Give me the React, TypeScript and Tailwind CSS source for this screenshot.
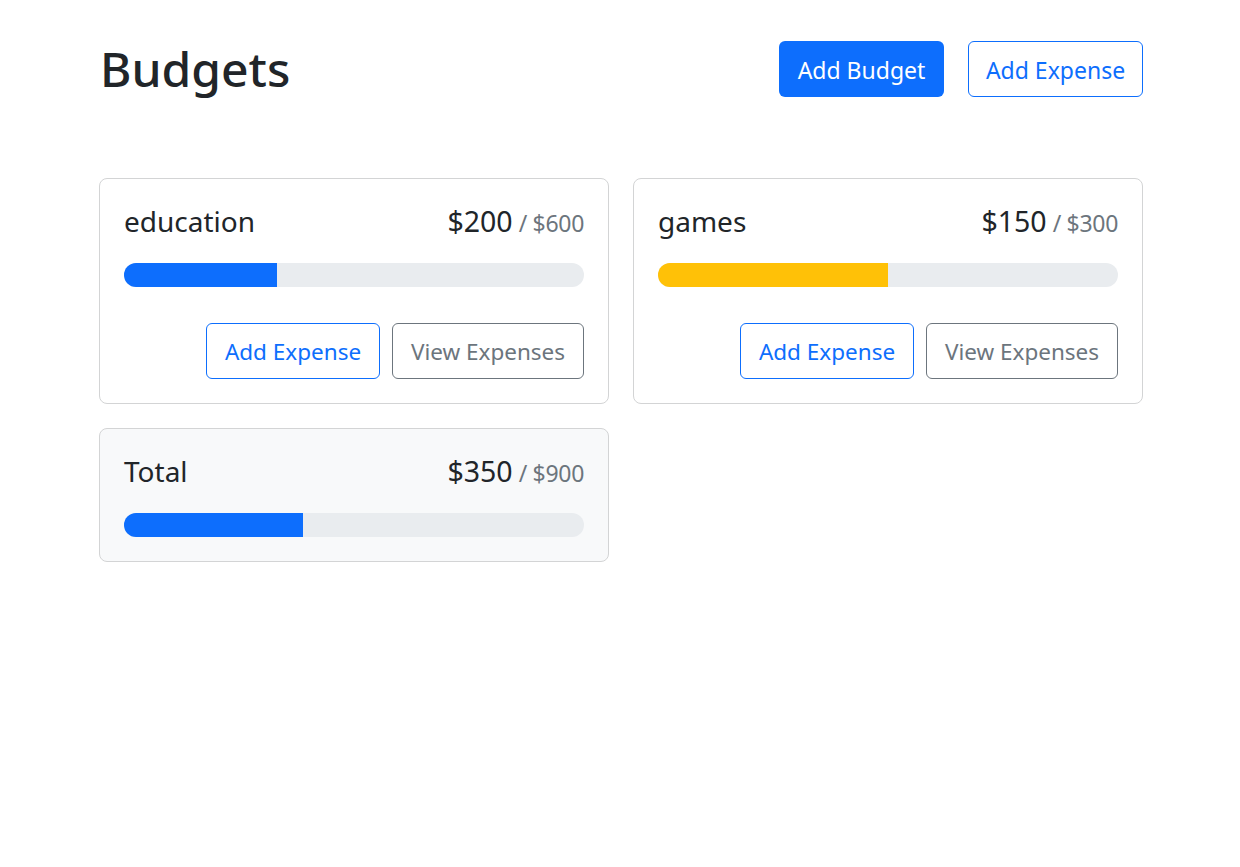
import React from "react";

const font = { fontFamily: '"Noto Sans", "Open Sans", sans-serif' };

function Bar({ pct, color }: { pct: number; color: string }) {
  return (
    <div className="h-[24px] w-full rounded-full bg-[#e9ecef] overflow-hidden flex">
      <div className={`h-full ${color}`} style={{ width: `${pct}%` }} />
    </div>
  );
}

function Card({
  name,
  amount,
  max,
  color,
  total,
}: {
  name: string;
  amount: number;
  max: number;
  color: string;
  total?: boolean;
}) {
  return (
    <div
      className={`border border-[#d3d4d5] rounded-[8px] p-[24px] ${
        total ? "bg-[#f8f9fa]" : "bg-white"
      }`}
    >
      <div className="flex items-baseline justify-between h-[36px] mb-[24px]">
        <div className="text-[28px] leading-[36px] text-[#212529]">{name}</div>
        <div className="flex items-baseline">
          <span className="text-[28.5px] leading-[36px] text-[#212529]">${amount}</span>
          <span className="text-[23px] text-[#6c757d] ml-[6px] tracking-[-0.3px]">/ ${max}</span>
        </div>
      </div>
      <Bar pct={(amount / max) * 100} color={color} />
      {!total && (
        <div className="flex justify-end gap-[12px] mt-[36px]">
          <button className="w-[174px] h-[56px] pt-[2px] rounded-[6px] border border-[#0d6efd] text-[#0d6efd] text-[22.5px] bg-white">
            Add Expense
          </button>
          <button className="w-[192px] h-[56px] pt-[2px] rounded-[6px] border border-[#6c757d] text-[#6c757d] text-[22.5px] bg-white">
            View Expenses
          </button>
        </div>
      )}
    </div>
  );
}

export default function App() {
  return (
    <div className="min-h-screen bg-white" style={font}>
      <div className="pl-[99px] pr-[97px] pt-[41px]">
        <div className="flex items-start justify-between mb-[81px]">
          <h1 className="text-[48px] leading-[56px] font-medium text-[#212529] ml-[1px]">
            Budgets
          </h1>
          <div className="flex gap-[24px]">
            <button className="w-[165px] h-[56px] pt-[2px] rounded-[6px] bg-[#0d6efd] text-white text-[23px]">
              Add Budget
            </button>
            <button className="w-[175px] h-[56px] pt-[2px] rounded-[6px] border border-[#0d6efd] text-[#0d6efd] text-[23px] bg-white">
              Add Expense
            </button>
          </div>
        </div>
        <div className="grid grid-cols-2 gap-[24px] items-start">
          <Card name="education" amount={200} max={600} color="bg-[#0d6efd]" />
          <Card name="games" amount={150} max={300} color="bg-[#ffc107]" />
          <Card name="Total" amount={350} max={900} color="bg-[#0d6efd]" total />
        </div>
      </div>
    </div>
  );
}
